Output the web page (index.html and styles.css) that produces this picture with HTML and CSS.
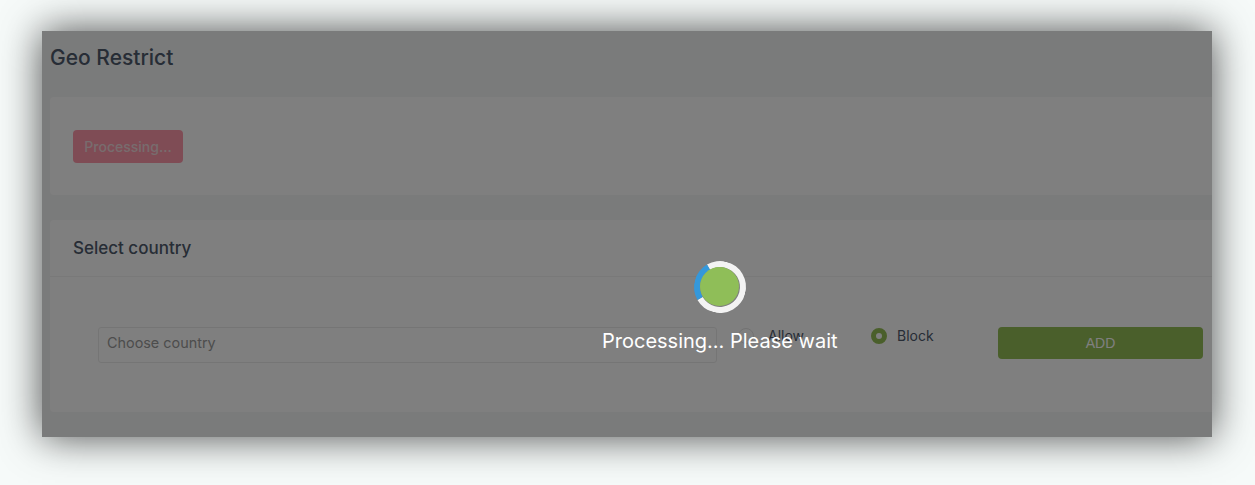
FILE: index.html
```html
<!DOCTYPE html>
<html lang="en">
<head>
    <meta charset="UTF-8">
    <meta name="viewport" content="width=device-width, initial-scale=1.0">
    <title>Geo Restrict</title>
    <link rel="stylesheet" href="styles.css">
</head>
<body>
    <div class="window">
        <h1 class="page-title">Geo Restrict</h1>

        <div class="card card-action">
            <button class="btn-processing">Processing...</button>
        </div>

        <div class="card">
            <div class="card-header">Select country</div>
            <div class="card-body">
                <div class="country-select">Choose country</div>
                <label class="radio radio-allow"><span class="radio-mark"></span>Allow</label>
                <label class="radio radio-block"><span class="radio-mark checked"></span>Block</label>
                <button class="btn-add">ADD</button>
            </div>
        </div>

        <div class="overlay">
            <div class="loader">
                <div class="spinner"></div>
                <div class="spinner-core"></div>
            </div>
            <div class="loader-text">Processing... Please wait</div>
        </div>
    </div>
</body>
</html>
```

FILE: styles.css
```css
* {
    box-sizing: border-box;
}
html, body {
    height: 100%;
}
body {
    margin: 0;
    padding: 31px 43px 48px 42px;
    background-color: #f6faf9;
    font-family: Inter, "Noto Sans", sans-serif;
    overflow: hidden;
}
.window {
    position: relative;
    height: 406px;
    padding-left: 8px;
    background-color: #f5f6f7;
    box-shadow: 0 0 38px rgba(0, 0, 0, 0.7);
    overflow: hidden;
}
.page-title {
    margin: 0;
    height: 66px;
    padding-top: 14px;
    font-size: 21px;
    line-height: 26px;
    font-weight: 500;
    color: #4e5a6c;
}
.card {
    width: 1200px;
    background: #fff;
    border-radius: 4px;
}
.card-action {
    height: 98px;
    margin-bottom: 25px;
    padding: 33px 23px;
}
.btn-processing {
    display: block;
    width: 110px;
    height: 33px;
    padding: 0;
    font-family: inherit;
    font-size: 14px;
    font-weight: 500;
    color: #f0d8dc;
    background-color: #ff99ab;
    border: none;
    border-radius: 4px;
}
.card-header {
    height: 57px;
    padding: 0 23px;
    font-size: 17px;
    font-weight: 500;
    line-height: 56px;
    color: #4e5a6c;
    border-bottom: 1px solid #f2f2f2;
}
.card-body {
    display: flex;
    align-items: flex-start;
    height: 135px;
    padding: 50px 0 0 48px;
}
.country-select {
    width: 619px;
    height: 36px;
    padding-left: 8px;
    font-size: 14.4px;
    line-height: 30px;
    color: #9a9a9a;
    border: 1px solid #ebebeb;
    border-radius: 3px;
}
.radio {
    display: flex;
    align-items: center;
    height: 18px;
    font-size: 14px;
    line-height: 14px;
    color: #4e5a6c;
}
.radio-allow {
    width: 133px;
    margin-left: 21px;
}
.radio-block {
    width: 127px;
}
.radio-mark {
    width: 16px;
    height: 16px;
    margin-right: 14px;
    border: 1px solid #e4e4e4;
    border-radius: 50%;
}
.radio-mark.checked {
    margin-right: 10px;
    border: 5px solid #95bf56;
    background: #fff;
}
.btn-add {
    width: 205px;
    height: 32px;
    padding: 0;
    font-family: "Liberation Sans", Arial, sans-serif;
    font-size: 14px;
    color: #ffffff;
    background-color: #95bf56;
    border: none;
    border-radius: 4px;
}
.overlay {
    position: absolute;
    inset: 0;
    background: rgba(0, 0, 0, 0.5);
}
.loader {
    position: absolute;
    left: 652px;
    top: 230px;
    width: 52px;
    height: 52px;
}
.spinner {
    width: 52px;
    height: 52px;
    border: 6px solid #f3f3f3;
    border-left-color: #3498db;
    border-radius: 50%;
    transform: rotate(15deg);
}
.spinner-core {
    position: absolute;
    left: 6px;
    top: 6px;
    width: 39px;
    height: 39px;
    background: #8fbe58;
    border-radius: 50%;
}
.loader-text {
    position: absolute;
    left: 560px;
    top: 296px;
    width: 235px;
    font-size: 20px;
    line-height: 28px;
    text-align: center;
    white-space: nowrap;
    color: #fff;
}
```
